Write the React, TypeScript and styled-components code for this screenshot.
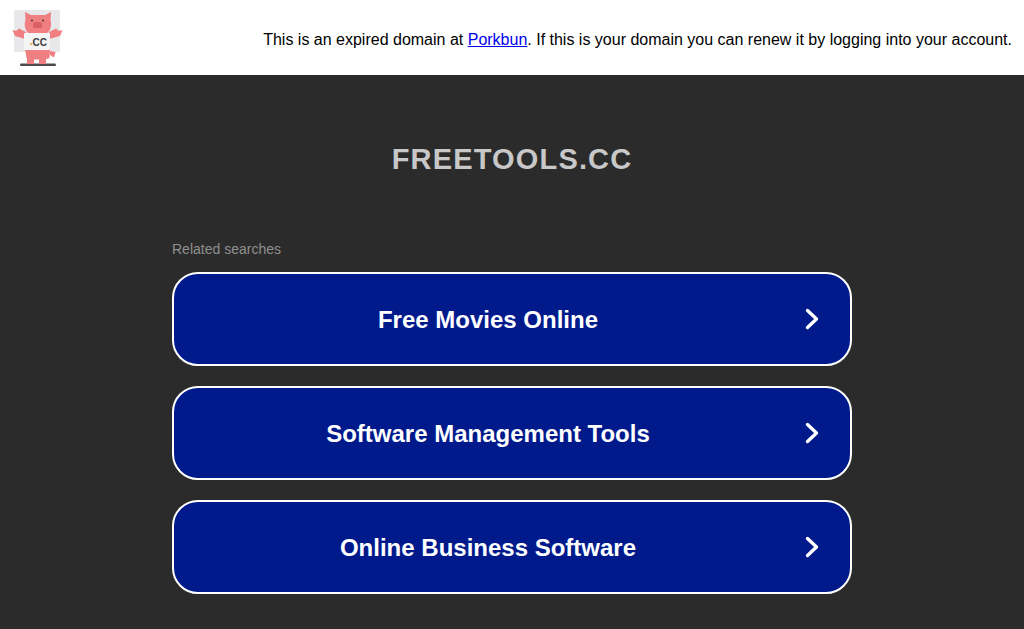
import React from 'react'
import styled, { createGlobalStyle } from 'styled-components'

const GlobalStyle = createGlobalStyle`
  html, body {
    margin: 0;
    padding: 0;
    background-color: #2b2b2b;
    font-family: "Liberation Sans", Arial, sans-serif;
  }
`

const Page = styled.div`
  display: flex;
  flex-direction: column;
  width: 100%;
  height: 629px;
  overflow: hidden;
  background-color: #2b2b2b;
`

const Banner = styled.div`
  display: flex;
  justify-content: space-between;
  align-items: center;
  flex: 0 0 75px;
  box-sizing: border-box;
  padding: 0 12px;
  background-color: white;
  color: black;
  font-size: 16px;
`

const Notice = styled.div`
  line-height: 18px;
  margin-top: 5px;
`

const Main = styled.div`
  display: flex;
  flex-direction: column;
  width: 680px;
  margin: 0 auto;
`

const Domain = styled.h1`
  margin: 66px 0 0;
  font-size: 29px;
  line-height: 36px;
  font-weight: 700;
  letter-spacing: 1.17px;
  text-align: center;
  color: #c8c8c8;
`

const RelatedLabel = styled.div`
  margin-top: 64px;
  font-size: 14px;
  line-height: 16px;
  color: #8f8f8f;
`

const LinkList = styled.div`
  display: flex;
  flex-direction: column;
  gap: 20px;
  margin-top: 15px;
`

const SearchLink = styled.a`
  display: flex;
  align-items: center;
  box-sizing: border-box;
  height: 94px;
  padding: 0 30px 0 0;
  border: 2px solid white;
  border-radius: 26px;
  background-color: #001a8c;
  color: white;
  font-size: 24px;
  font-weight: 700;
  text-decoration: none;
`

const LinkText = styled.span`
  flex: 1;
  padding: 2px 2px 0 0;
  text-align: center;
`

// drawn in page coordinates, the viewBox starts where the logo sits in the banner
const Logo = () => (
  <svg width="52" height="59" viewBox="12 8 52 59">
    <defs>
      <filter id="soft" x="-5%" y="-5%" width="110%" height="110%">
        <feGaussianBlur stdDeviation="0.35" />
      </filter>
    </defs>
    <g filter="url(#soft)">
      <rect x="14" y="10" width="46" height="42" rx="1" fill="#e8e8ea" />
      <rect x="20" y="63.5" width="36" height="2.5" rx="1.2" fill="#4f4a4a" />
      <rect x="27" y="56" width="7" height="8" fill="#f07f82" />
      <rect x="39" y="56" width="7" height="8" fill="#f07f82" />
      <path d="M50 51 L55.5 52 L54 57.5 L50 55 Z" fill="#f07f82" />
      <path d="M25 39 L15 36 L12.5 30 L16 31 L19 28.5 L26 32 Z" fill="#f07f82" />
      <path d="M49 39 L60 36 L62.5 30 L59 31 L56 28.5 L49 32 Z" fill="#f07f82" />
      <path d="M25 12 L31 15 H45 L51 12 L50.5 20 C52.5 27 49 34 44 34 H31 C27 34 23 27 25.5 20 Z" fill="#f07f82" />
      <path d="M25 49 H50 L49.5 58 C46 60 29 60 26.5 58 Z" fill="#f07f82" />
      <rect x="24" y="33" width="26" height="17" rx="1" fill="#f4f4f4" />
      <rect x="33" y="22" width="9" height="6" rx="2.6" fill="#d95e64" />
      <circle cx="32" cy="20.5" r="1" fill="#4a3535" />
      <circle cx="43" cy="20.5" r="1" fill="#4a3535" />
      <circle cx="31" cy="44" r="1.1" fill="#e2a23b" />
    </g>
    <text x="32.5" y="45.5" fontFamily="Liberation Sans" fontSize="10" fontWeight="700" fill="#3a3a3a">CC</text>
  </svg>
)

const Chevron = () => (
  <svg width="16" height="24" viewBox="0 0 16 24" fill="none">
    <path d="M3.5 3.5 L12.5 12 L3.5 20.5" stroke="white" strokeWidth="3.3" strokeLinecap="round" strokeLinejoin="round" />
  </svg>
)

const searches = ['Free Movies Online', 'Software Management Tools', 'Online Business Software']

const App = () => (
  <Page>
    <GlobalStyle />
    <Banner>
      <Logo />
      <Notice>
        This is an expired domain at <a href="#porkbun">Porkbun</a>. If this is your domain you can renew it by logging into your account.
      </Notice>
    </Banner>
    <Main>
      <Domain>FREETOOLS.CC</Domain>
      <RelatedLabel>Related searches</RelatedLabel>
      <LinkList>
        {searches.map(search => (
          <SearchLink href="#search" key={search}>
            <LinkText>{search}</LinkText>
            <Chevron />
          </SearchLink>
        ))}
      </LinkList>
    </Main>
  </Page>
)

export default App
